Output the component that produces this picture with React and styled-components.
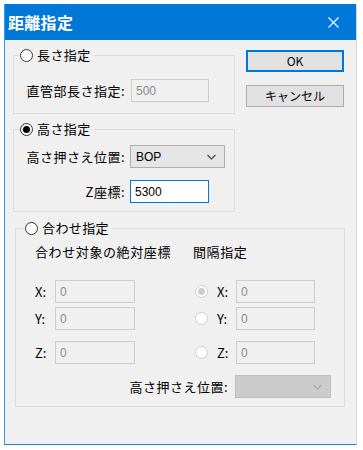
import React from "react";
import styled, { createGlobalStyle } from "styled-components";

const Global = createGlobalStyle`
  html, body { margin: 0; padding: 0; background: #ffffff; }
  body { font-family: "Noto Sans CJK JP", "Noto Sans", sans-serif; }
  * { box-sizing: border-box; }
`;

const Page = styled.div`
  padding: 4px 0 0 4px;
  width: 363px;
  height: 450px;
`;

const Window = styled.div`
  width: 353px;
  height: 441px;
  background: #f0f0f0;
  border-left: 1px solid #3d96e3;
  border-bottom: 1px solid #1e7fd6;
  border-right: 1px solid #d8d8d8;
  display: flex;
  flex-direction: column;
`;

const TitleBar = styled.div`
  height: 36px;
  background: #0078d7;
  display: flex;
  align-items: center;
  justify-content: space-between;
  padding: 0 17px 0 3px;
  flex-shrink: 0;
`;

const Title = styled.div`
  color: #ffffff;
  font-weight: 700;
  font-size: 16px;
  line-height: 20px;
  letter-spacing: 0.3px;
`;

const Close = styled.div`
  width: 11px;
  height: 11px;
  display: flex;
`;

const Client = styled.div`
  flex: 1;
  padding: 7px 11px 0 8px;
  display: flex;
  flex-direction: column;
`;

const TopRow = styled.div`
  display: flex;
  gap: 11px;
`;

const LeftCol = styled.div`
  width: 222px;
  display: flex;
  flex-direction: column;
  gap: 7px;
`;

const ButtonCol = styled.div`
  width: 98px;
  padding-top: 3px;
  display: flex;
  flex-direction: column;
  gap: 13px;
`;

const Button = styled.button`
  height: 22px;
  width: 98px;
  background: #e1e1e1;
  border: ${(p) => (p.$default ? "2px solid #0078d7" : "1px solid #adadad")};
  font-family: "Noto Sans CJK JP", "Noto Sans", sans-serif;
  font-size: 12px;
  line-height: 16px;
  color: #000;
  padding: 0;
  display: flex;
  align-items: center;
  justify-content: center;
`;

const Group = styled.fieldset`
  margin: ${(p) => p.$top || 0}px 0 0 ${(p) => p.$indent || 0}px;
  padding: 0;
  border: 1px solid #dcdcdc;
  min-width: 0;
  width: ${(p) => p.$width}px;
`;

const Legend = styled.legend`
  margin-left: ${(p) => p.$offset}px;
  padding: 0 3px 0 0;
  height: 16px;
  display: flex;
  align-items: center;
  gap: 4px;
  font-size: 13px;
  line-height: 16px;
  letter-spacing: 0.4px;
  color: #000;
`;

const Radio = styled.span`
  width: 13px;
  height: 13px;
  border-radius: 50%;
  flex-shrink: 0;
  border: 1px solid ${(p) => (p.$disabled ? "#cccccc" : "#333333")};
  background: #ffffff;
  display: flex;
  align-items: center;
  justify-content: center;
  &::after {
    content: "";
    width: 7px;
    height: 7px;
    border-radius: 50%;
    background: ${(p) => (p.$disabled ? "#cccccc" : "#000000")};
    display: ${(p) => (p.$checked ? "block" : "none")};
  }
`;

const FormGrid = styled.div`
  display: grid;
  grid-template-columns: 111px auto;
  column-gap: ${(p) => p.$gap || 5}px;
  row-gap: ${(p) => p.$rowGap || 0}px;
  align-items: center;
  padding: ${(p) => p.$pad};
`;

const Label = styled.span`
  font-size: 13px;
  line-height: 16px;
  letter-spacing: 0.5px;
  color: #000;
  white-space: nowrap;
  text-align: ${(p) => p.$align || "left"};
`;

const Input = styled.div`
  width: ${(p) => p.$w}px;
  height: 23px;
  border: 1px solid ${(p) => (p.$focus ? "#0078d7" : p.$disabled ? "#cccccc" : "#7a7a7a")};
  background: ${(p) => (p.$disabled ? "#f0f0f0" : "#ffffff")};
  font-family: "Liberation Sans", Arial, sans-serif;
  font-size: 12px;
  color: ${(p) => (p.$disabled ? "#8a8a8a" : "#000000")};
  display: flex;
  align-items: center;
  padding-left: 4px;
`;

const Select = styled.div`
  width: ${(p) => p.$w}px;
  height: 23px;
  border: 1px solid ${(p) => (p.$disabled ? "#bfbfbf" : "#adadad")};
  background: ${(p) => (p.$disabled ? "#cccccc" : "#e5e5e5")};
  font-family: "Liberation Sans", Arial, sans-serif;
  font-size: 12px;
  color: #000;
  display: flex;
  align-items: center;
  justify-content: space-between;
  padding: 0 8px 0 5px;
`;

const Chevron = ({ color }) => (
  <svg width="9" height="6" viewBox="0 0 9 6">
    <path d="M0.5 1 L4.5 5 L8.5 1" fill="none" stroke={color} strokeWidth="1.2" />
  </svg>
);

const Body3 = styled.div`
  padding: 8px 13px 8px 19px;
  display: flex;
  flex-direction: column;
`;

const CoordGrid = styled.div`
  display: grid;
  grid-template-columns: 20px 80px 60px 22px 19px 79px;
  align-items: center;
`;

const Header = styled.span`
  font-size: 13px;
  line-height: 16px;
  letter-spacing: 0.6px;
  color: #000;
  white-space: nowrap;
  grid-column: ${(p) => p.$col};
  margin-left: ${(p) => p.$shift || 0}px;
  margin-bottom: 20px;
`;

const Axis = styled.span`
  font-family: "Noto Sans CJK JP", sans-serif;
  font-size: 13px;
  line-height: 16px;
  color: #000;
`;

const Cell = styled.div`
  display: flex;
  align-items: center;
  margin-top: ${(p) => p.$mt || 0}px;
`;

const BottomRow = styled.div`
  display: flex;
  justify-content: flex-end;
  align-items: center;
  gap: 7px;
  margin-top: 11px;
`;

const coordRows = [
  { axis: "X", mt: 0, checked: true },
  { axis: "Y", mt: 4, checked: false },
  { axis: "Z", mt: 11, checked: false },
];

export default function App() {
  return (
    <>
      <Global />
      <Page>
        <Window>
          <TitleBar>
            <Title>距離指定</Title>
            <Close>
              <svg width="11" height="11" viewBox="0 0 11 11">
                <path d="M0.5 0.5 L10.5 10.5 M10.5 0.5 L0.5 10.5" stroke="#ffffff" strokeWidth="1.1" />
              </svg>
            </Close>
          </TitleBar>
          <Client>
            <TopRow>
              <LeftCol>
                <Group $width={222}>
                  <Legend $offset={6}>
                    <Radio />
                    長さ指定
                  </Legend>
                  <FormGrid $pad="16px 0 11px 0" $gap={6}>
                    <Label $align="right">直管部長さ指定:</Label>
                    <Input $w={78} $disabled>500</Input>
                  </FormGrid>
                </Group>
                <Group $width={222}>
                  <Legend $offset={6}>
                    <Radio $checked />
                    高さ指定
                  </Legend>
                  <FormGrid $pad="8px 0 8px 0" $rowGap={12}>
                    <Label $align="right">高さ押さえ位置:</Label>
                    <Select $w={95}>
                      BOP
                      <Chevron color="#444" />
                    </Select>
                    <Label $align="right">Z座標:</Label>
                    <Input $w={79} $focus>5300</Input>
                  </FormGrid>
                </Group>
              </LeftCol>
              <ButtonCol>
                <Button $default>OK</Button>
                <Button>キャンセル</Button>
              </ButtonCol>
            </TopRow>
            <Group $width={330} $indent={2} $top={8}>
              <Legend $offset={9}>
                <Radio />
                合わせ指定
              </Legend>
              <Body3>
                <CoordGrid>
                  <Header $col="1 / 4">合わせ対象の絶対座標</Header>
                  <Header $col="4 / 7" $shift={-2}>間隔指定</Header>
                  {coordRows.map((r) => (
                    <React.Fragment key={r.axis}>
                      <Cell $mt={r.mt}><Axis>{r.axis}:</Axis></Cell>
                      <Cell $mt={r.mt}><Input $w={80} $disabled>0</Input></Cell>
                      <Cell $mt={r.mt} />
                      <Cell $mt={r.mt}><Radio $disabled $checked={r.checked} /></Cell>
                      <Cell $mt={r.mt}><Axis>{r.axis}:</Axis></Cell>
                      <Cell $mt={r.mt}><Input $w={79} $disabled>0</Input></Cell>
                    </React.Fragment>
                  ))}
                </CoordGrid>
                <BottomRow>
                  <Label>高さ押さえ位置:</Label>
                  <Select $w={96} $disabled>
                    <span />
                    <Chevron color="#a8a8a8" />
                  </Select>
                </BottomRow>
              </Body3>
            </Group>
          </Client>
        </Window>
      </Page>
    </>
  );
}
